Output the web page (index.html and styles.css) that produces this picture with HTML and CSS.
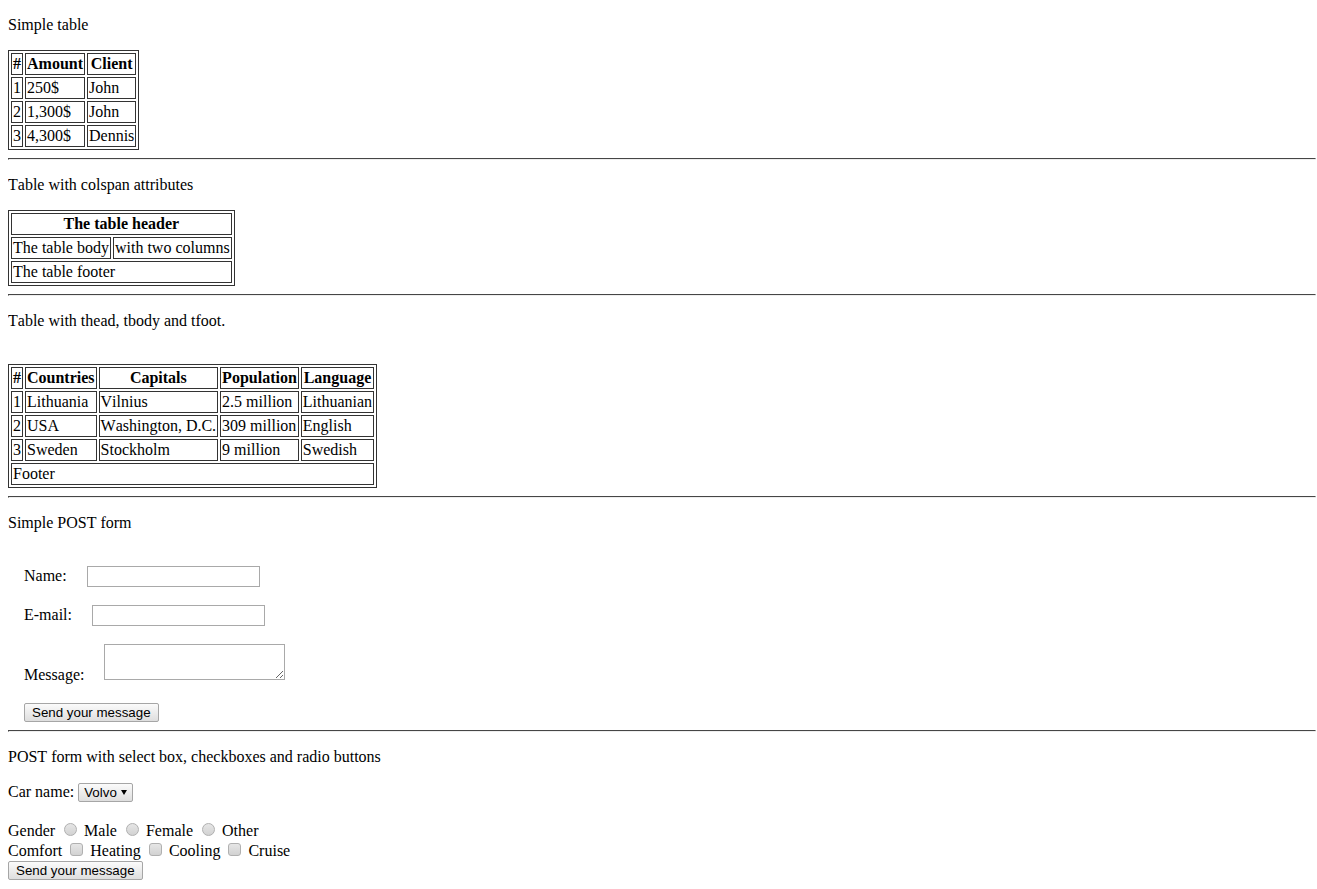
FILE: index.html
```html
<!DOCTYPE html>
<html>
<head>
<meta charset="utf-8">
<title>Tables and forms</title>
<link rel="stylesheet" href="styles.css">
</head>
<body>
<p>Simple table</p>
<table class="grid">
  <tr><th>#</th><th>Amount</th><th>Client</th></tr>
  <tr><td>1</td><td>250$</td><td>John</td></tr>
  <tr><td>2</td><td>1,300$</td><td>John</td></tr>
  <tr><td>3</td><td>4,300$</td><td>Dennis</td></tr>
</table>
<hr class="rule">
<p>Table with colspan attributes</p>
<table class="grid">
  <tr><th colspan="2">The table header</th></tr>
  <tr><td>The table body</td><td>with two columns</td></tr>
  <tr><td colspan="2">The table footer</td></tr>
</table>
<hr class="rule">
<p class="spaced">Table with thead, tbody and tfoot.</p>
<table class="grid">
  <thead>
    <tr><th>#</th><th>Countries</th><th>Capitals</th><th>Population</th><th>Language</th></tr>
  </thead>
  <tbody>
    <tr><td>1</td><td>Lithuania</td><td>Vilnius</td><td>2.5 million</td><td>Lithuanian</td></tr>
    <tr><td>2</td><td>USA</td><td>Washington, D.C.</td><td>309 million</td><td>English</td></tr>
    <tr><td>3</td><td>Sweden</td><td>Stockholm</td><td>9 million</td><td>Swedish</td></tr>
  </tbody>
  <tfoot>
    <tr><td colspan="5">Footer</td></tr>
  </tfoot>
</table>
<hr class="rule">
<p>Simple POST form</p>
<form class="simple-form" method="post" action="#">
  <div class="field first"><label class="lbl" for="name">Name:</label> <input class="txt" id="name" type="text" name="name"></div>
  <div class="field"><label class="lbl" for="mail">E-mail:</label> <input class="txt" id="mail" type="text" name="mail"></div>
  <div class="field"><label class="lbl" for="msg">Message:</label> <textarea class="area" id="msg" name="msg"></textarea></div>
  <div class="actions"><button class="btn" type="submit">Send your message</button></div>
</form>
<hr class="rule">
<p>POST form with select box, checkboxes and radio buttons</p>
<form class="choice-form" method="post" action="#">
  <p class="car">Car name: <span class="select-wrap"><select class="sel" name="car"><option>Volvo</option><option>Saab</option><option>Audi</option></select></span></p>
  <div class="opt">Gender <input class="radio" type="radio" name="gender" id="g1"> <label for="g1">Male</label> <input class="radio" type="radio" name="gender" id="g2"> <label for="g2">Female</label> <input class="radio" type="radio" name="gender" id="g3"> <label for="g3">Other</label></div>
  <div class="opt">Comfort <input class="check" type="checkbox" id="c1"> <label for="c1">Heating</label> <input class="check" type="checkbox" id="c2"> <label for="c2">Cooling</label> <input class="check" type="checkbox" id="c3"> <label for="c3">Cruise</label></div>
  <div><button class="btn" type="submit">Send your message</button></div>
</form>
</body>
</html>
```
FILE: styles.css
```css
body {
  margin: 0 1px 8px 8px;
  font-family: "Liberation Serif", "Times New Roman", serif;
  font-size: 16px;
  color: #000;
  background: #fff;
  font-kerning: none;
}

p {
  margin: 16px 0;
}

p.spaced {
  margin-bottom: 34px;
}

.grid {
  border: 1px solid #333;
  border-spacing: 2px;
}

.grid th,
.grid td {
  border: 1px solid #333;
  padding: 1px;
}

.rule {
  box-sizing: border-box;
  margin: 8px 0;
  border: 1px inset #eee;
  border-top-color: #9a9a9a;
  border-left-color: #9a9a9a;
  height: 2px;
}

.simple-form {
  padding-left: 16px;
}

.field {
  margin: 16px 0;
}

.field.first {
  margin-top: 33px;
}

.lbl {
  margin-right: 16px;
}

.txt,
.sel,
.btn,
.area {
  font-family: "Liberation Sans", Arial, sans-serif;
  font-size: 13.333px;
  color: #000;
}

.txt {
  box-sizing: border-box;
  width: 173px;
  height: 21px;
  margin: 1px 0;
  padding: 1px 2px;
  border: 1px solid #a9a9a9;
  background: #fff;
}

.area {
  box-sizing: border-box;
  width: 181px;
  height: 36px;
  margin: 1px 0 0 0;
  padding: 2px;
  border: 1px solid #a9a9a9;
  font-family: "Liberation Mono", monospace;
}

.btn {
  box-sizing: border-box;
  height: 19px;
  margin: 0;
  padding: 0 7px;
  border: 1px solid #a6a6a6;
  border-radius: 2px;
  background: linear-gradient(#fbfbfb, #dedede);
  line-height: 15px;
}

.actions {
  margin-top: 19px;
}

.select-wrap {
  position: relative;
  display: inline-block;
}

.select-wrap::after {
  content: "";
  position: absolute;
  right: 6px;
  top: 8px;
  border-left: 3.5px solid transparent;
  border-right: 3.5px solid transparent;
  border-top: 5px solid #000;
  pointer-events: none;
}

.sel {
  -webkit-appearance: none;
  appearance: none;
  box-sizing: border-box;
  width: 55px;
  height: 19px;
  margin: 1px 0;
  padding: 0 0 0 5px;
  border: 1px solid #a6a6a6;
  border-radius: 2px;
  background: linear-gradient(#fbfbfb, #dedede);
  line-height: 17px;
}

p.car {
  margin-bottom: 18px;
}

.opt {
  line-height: 20px;
  height: 20px;
}

.radio,
.check {
  -webkit-appearance: none;
  appearance: none;
  box-sizing: border-box;
  width: 13px;
  height: 13px;
  border: 1px solid #b0b0b0;
  background: linear-gradient(#e6e6e6, #d2d2d2);
  vertical-align: baseline;
}

.radio {
  border-radius: 50%;
  margin: 0 3px 0 5px;
}

.check {
  border-radius: 3px;
  margin: 0 3px 0 4px;
}

.choice-form {
  margin: 0;
}
```
